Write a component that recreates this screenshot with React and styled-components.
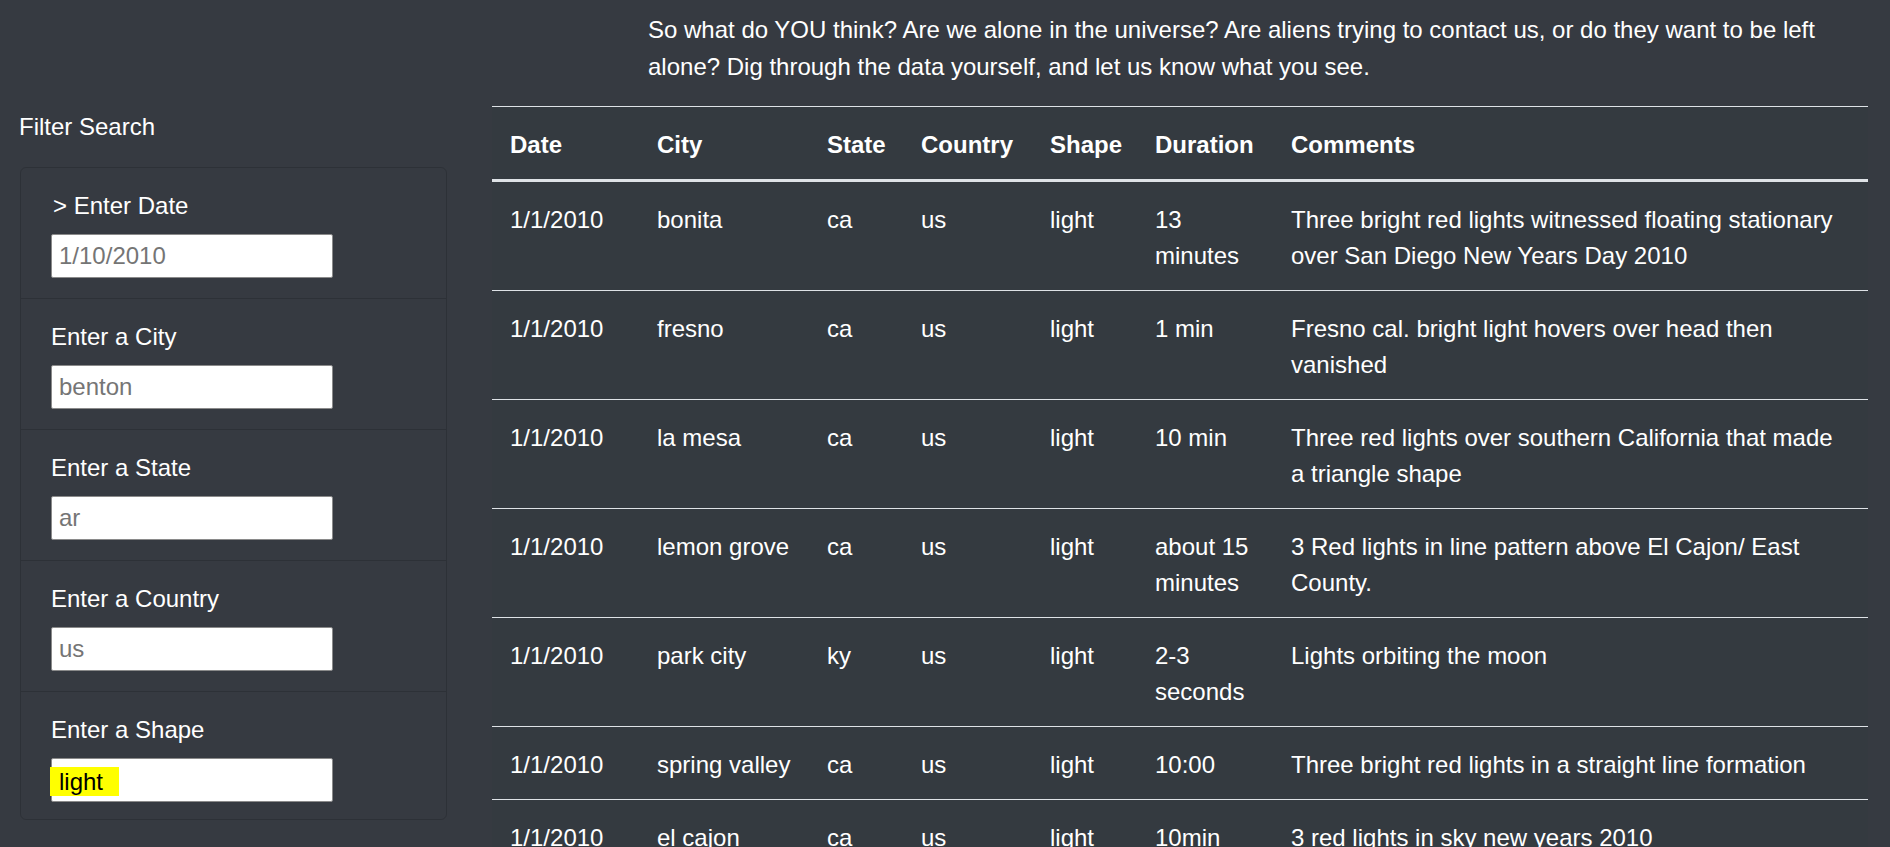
import React from "react";
import styled, { createGlobalStyle } from "styled-components";

const GlobalStyle = createGlobalStyle`
  html, body {
    margin: 0;
    padding: 0;
    background: #363a41;
    overflow: hidden;
  }
  body {
    font-family: "Liberation Sans", Arial, sans-serif;
    font-size: 24px;
    line-height: 36px;
    color: #fff;
  }
`;

const Page = styled.div`
  display: grid;
  grid-template-columns: 427px 1376px;
  column-gap: 45px;
  padding: 0 22px 0 20px;
  height: 847px;
`;

const Sidebar = styled.aside`
  padding-top: 109px;
`;

const SideTitle = styled.div`
  margin: 0 0 22px -1px;
`;

const Card = styled.div`
  border: 1px solid rgba(0, 0, 0, 0.15);
  border-radius: 6px;
`;

const Item = styled.div`
  display: flex;
  flex-direction: column;
  align-items: flex-start;
  padding: 18px 30px ${(p) => (p.last ? "17px" : "20px")};
  border-bottom: ${(p) => (p.last ? "none" : "1px solid rgba(0, 0, 0, 0.15)")};
`;

const Label = styled.label`
  padding: 2px 0 0 ${(p) => (p.arrow ? "2px" : "0")};
  margin-bottom: 10px;
`;

const Input = styled.input`
  box-sizing: border-box;
  width: 282px;
  height: 44px;
  padding: 0 7px;
  border: 1px solid #8a8a8a;
  border-radius: 2px;
  background: #fff;
  font-family: "Liberation Sans", Arial, sans-serif;
  font-size: 24px;
  color: #000;
  outline: none;
  &::placeholder {
    color: #757575;
  }
`;

const FakeInput = styled.div`
  box-sizing: border-box;
  display: flex;
  align-items: center;
  width: 282px;
  height: 44px;
  padding: 2px 7px 0;
  border: 1px solid #8a8a8a;
  border-radius: 2px;
  background: #fff;
  color: #000;
`;

const Mark = styled.span`
  background: #ffff00;
  margin-left: -9px;
  padding: 0 16px 0 9px;
  line-height: 29px;
`;

const Main = styled.main`
  padding-top: 11px;
`;

const Intro = styled.p`
  width: 1200px;
  margin: 0 0 21px 156px;
  line-height: 37px;
`;

const Table = styled.table`
  width: 1376px;
  table-layout: fixed;
  border-collapse: collapse;
  background: #343a40;
  color: #fff;
`;

const Th = styled.th`
  text-align: left;
  font-weight: 700;
  padding: 20px 18px 16px;
  border-top: 1px solid #dee2e6;
  border-bottom: 3px solid #dee2e6;
  vertical-align: bottom;
`;

const Td = styled.td`
  padding: 20px 18px 16px;
  border-top: 1px solid #dee2e6;
  vertical-align: top;
  white-space: ${(p) => (p.wrap ? "normal" : "nowrap")};
`;

const columns = [
  ["Date", 147],
  ["City", 170],
  ["State", 94],
  ["Country", 129],
  ["Shape", 105],
  ["Duration", 136],
  ["Comments", 595],
];

const sightings = [
  ["1/1/2010", "bonita", "ca", "us", "light", "13 minutes", "Three bright red lights witnessed floating stationary over San Diego New Years Day 2010"],
  ["1/1/2010", "fresno", "ca", "us", "light", "1 min", "Fresno cal. bright light hovers over head then vanished"],
  ["1/1/2010", "la mesa", "ca", "us", "light", "10 min", "Three red lights over southern California that made a triangle shape"],
  ["1/1/2010", "lemon grove", "ca", "us", "light", "about 15 minutes", "3 Red lights in line pattern above El Cajon/ East County."],
  ["1/1/2010", "park city", "ky", "us", "light", "2-3 seconds", "Lights orbiting the moon"],
  ["1/1/2010", "spring valley", "ca", "us", "light", "10:00", "Three bright red lights in a straight line formation"],
  ["1/1/2010", "el cajon", "ca", "us", "light", "10min", "3 red lights in sky new years 2010"],
];

const filters = [
  { label: "> Enter Date", value: "1/10/2010", arrow: true },
  { label: "Enter a City", value: "benton" },
  { label: "Enter a State", value: "ar" },
  { label: "Enter a Country", value: "us" },
];

export default function App() {
  return (
    <>
      <GlobalStyle />
      <Page>
        <Sidebar>
          <SideTitle>Filter Search</SideTitle>
          <Card>
            {filters.map((f) => (
              <Item key={f.label}>
                <Label arrow={f.arrow}>{f.label}</Label>
                <Input placeholder={f.value} readOnly />
              </Item>
            ))}
            <Item last>
              <Label>Enter a Shape</Label>
              <FakeInput>
                <Mark>light</Mark>
              </FakeInput>
            </Item>
          </Card>
        </Sidebar>

        <Main>
          <Intro>
            So what do YOU think? Are we alone in the universe? Are aliens trying to contact us, or do they want to be left alone? Dig through the data yourself, and let us know what you see.
          </Intro>
          <Table>
            <colgroup>
              {columns.map(([name, w]) => (
                <col key={name} style={{ width: w }} />
              ))}
            </colgroup>
            <thead>
              <tr>
                {columns.map(([name]) => (
                  <Th key={name}>{name}</Th>
                ))}
              </tr>
            </thead>
            <tbody>
              {sightings.map((row, i) => (
                <tr key={i}>
                  {row.map((cell, j) => (
                    <Td key={j} wrap={j >= 5}>{cell}</Td>
                  ))}
                </tr>
              ))}
            </tbody>
          </Table>
        </Main>
      </Page>
    </>
  );
}
